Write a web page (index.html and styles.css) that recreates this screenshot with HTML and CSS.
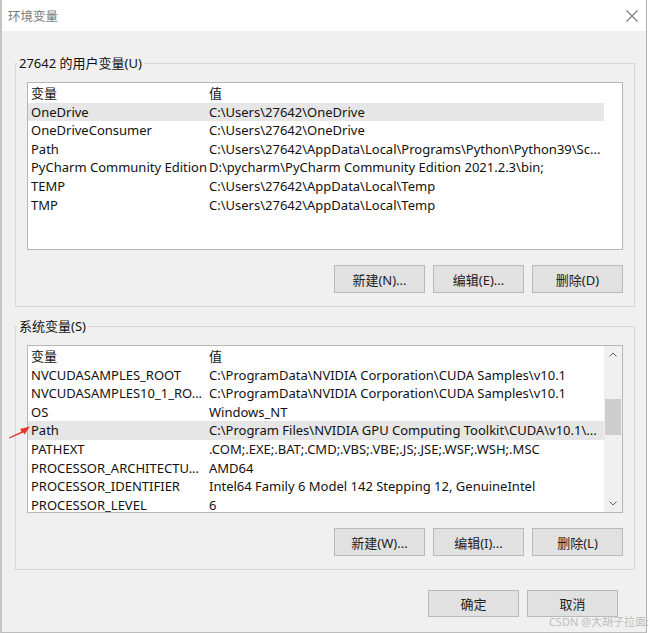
FILE: index.html
```html
<!DOCTYPE html>
<html lang="zh-CN">
<head>
    <meta charset="UTF-8">
    <meta name="viewport" content="width=device-width, initial-scale=1.0">
    <title>环境变量</title>
    <link rel="stylesheet" href="styles.css">
</head>
<body>
    <div class="window">
        <div class="titlebar">
            <span class="title">环境变量</span>
            <svg class="close" width="12" height="12" viewBox="0 0 12 12">
                <path d="M0.5 0.5 L11.5 11.5 M11.5 0.5 L0.5 11.5" stroke="#7a7a7a" stroke-width="1.1" fill="none"/>
            </svg>
        </div>

        <div class="content">
            <!-- Variables utilisateur -->
            <fieldset class="group">
                <legend>27642 的用户变量(U)</legend>
                <div class="group-body">
                    <div class="list">
                        <div class="rows">
                            <div class="row"><span class="name">变量</span><span class="value">值</span></div>
                            <div class="row selected"><span class="name">OneDrive</span><span class="value">C:\Users\27642\OneDrive</span></div>
                            <div class="row"><span class="name">OneDriveConsumer</span><span class="value">C:\Users\27642\OneDrive</span></div>
                            <div class="row"><span class="name">Path</span><span class="value">C:\Users\27642\AppData\Local\Programs\Python\Python39\Sc...</span></div>
                            <div class="row"><span class="name">PyCharm Community Edition</span><span class="value">D:\pycharm\PyCharm Community Edition 2021.2.3\bin;</span></div>
                            <div class="row"><span class="name">TEMP</span><span class="value">C:\Users\27642\AppData\Local\Temp</span></div>
                            <div class="row"><span class="name">TMP</span><span class="value">C:\Users\27642\AppData\Local\Temp</span></div>
                        </div>
                    </div>
                    <div class="buttons">
                        <button>新建(N)...</button>
                        <button>编辑(E)...</button>
                        <button>删除(D)</button>
                    </div>
                </div>
            </fieldset>

            <!-- Variables système -->
            <fieldset class="group system">
                <legend>系统变量(S)</legend>
                <div class="group-body">
                    <div class="list">
                        <div class="rows">
                            <div class="row"><span class="name">变量</span><span class="value">值</span></div>
                            <div class="row"><span class="name">NVCUDASAMPLES_ROOT</span><span class="value">C:\ProgramData\NVIDIA Corporation\CUDA Samples\v10.1</span></div>
                            <div class="row"><span class="name">NVCUDASAMPLES10_1_RO...</span><span class="value">C:\ProgramData\NVIDIA Corporation\CUDA Samples\v10.1</span></div>
                            <div class="row"><span class="name">OS</span><span class="value">Windows_NT</span></div>
                            <div class="row selected"><span class="name">Path</span><span class="value">C:\Program Files\NVIDIA GPU Computing Toolkit\CUDA\v10.1\...</span></div>
                            <div class="row"><span class="name">PATHEXT</span><span class="value">.COM;.EXE;.BAT;.CMD;.VBS;.VBE;.JS;.JSE;.WSF;.WSH;.MSC</span></div>
                            <div class="row"><span class="name">PROCESSOR_ARCHITECTU...</span><span class="value">AMD64</span></div>
                            <div class="row"><span class="name">PROCESSOR_IDENTIFIER</span><span class="value">Intel64 Family 6 Model 142 Stepping 12, GenuineIntel</span></div>
                            <div class="row"><span class="name">PROCESSOR_LEVEL</span><span class="value">6</span></div>
                        </div>
                        <div class="scrollbar">
                            <div class="arrow">
                                <svg width="8" height="5" viewBox="0 0 8 5"><path d="M0.5 4.5 L4 1 L7.5 4.5" stroke="#606060" fill="none"/></svg>
                            </div>
                            <div class="thumb"></div>
                            <div class="arrow down">
                                <svg width="8" height="5" viewBox="0 0 8 5"><path d="M0.5 0.5 L4 4 L7.5 0.5" stroke="#606060" fill="none"/></svg>
                            </div>
                        </div>
                    </div>
                    <div class="buttons">
                        <button>新建(W)...</button>
                        <button>编辑(I)...</button>
                        <button>删除(L)</button>
                    </div>
                </div>
            </fieldset>

            <div class="dialog-buttons">
                <button>确定</button>
                <button>取消</button>
            </div>
        </div>

        <!-- Flèche rouge d'annotation -->
        <svg class="marker" width="32" height="20" viewBox="0 0 32 20">
            <path d="M7 17.5 L19.5 11.6 L18 9 L28 6.5 L22.5 14.5 L21.2 12.6 L7.5 18.5 Z" fill="#e63329"/>
        </svg>

        <div class="watermark">CSDN @大胡子拉面:</div>
    </div>
</body>
</html>
```

FILE: styles.css
```css
* {
    box-sizing: border-box;
}

body {
    margin: 0;
    background-color: #fff;
    font-family: "Noto Sans", "Noto Sans CJK SC", sans-serif;
    font-size: 13px;
    color: #111;
}

.window {
    position: relative;
    width: 647px;
    height: 633px;
    background-color: #f0f0f0;
    border-left: 2px solid #c4c4c4;
    border-right: 1px solid #b0b0b0;
    border-bottom: 1px solid #bcbcbc;
    display: flex;
    flex-direction: column;
}

.titlebar {
    height: 31px;
    background-color: #fff;
    display: flex;
    align-items: center;
    justify-content: space-between;
    padding: 0 8px 0 6px;
}

.title {
    font-size: 12.5px;
    color: #7a7a7a;
}

.content {
    padding: 23px 11px 0 13px;
    display: flex;
    flex-direction: column;
}

.group {
    width: 620px;
    min-width: 0;
    margin: 0;
    padding: 0 0 13px 0;
    border: 1px solid #d6d6d6;
}

.group.system {
    margin-top: 10px;
}

legend {
    margin-left: 1px;
    padding: 0 2px;
    line-height: 18px;
}

.group-body {
    padding: 0 11px;
}

.list {
    margin-top: 10px;
    width: 596px;
    height: 168px;
    background-color: #fff;
    border: 1px solid #b6b6b6;
    display: flex;
    overflow: hidden;
}

.rows {
    width: 576px;
    padding-top: 1px;
}

.row {
    display: flex;
    height: 18.6px;
    line-height: 18.6px;
    padding-left: 3px;
    white-space: nowrap;
}

.row.selected {
    background-color: #e6e6e6;
}

.name {
    width: 178px;
    flex-shrink: 0;
    overflow: hidden;
}

.value {
    flex: 1;
    overflow: hidden;
}

.scrollbar {
    width: 18px;
    margin-left: auto;
    background-color: #f0f0f0;
    display: flex;
    flex-direction: column;
    align-items: center;
}

.arrow {
    height: 17px;
    display: flex;
    align-items: center;
    justify-content: center;
}

.arrow.down {
    margin-top: auto;
}

.thumb {
    width: 16px;
    height: 36px;
    margin-top: 36px;
    background-color: #cdcdcd;
}

.buttons {
    display: flex;
    justify-content: flex-end;
    gap: 8px;
    margin-top: 15px;
}

button {
    width: 91px;
    height: 28px;
    padding: 0;
    font: inherit;
    color: #222;
    background-color: #e1e1e1;
    border: 1px solid #b9b9b9;
}

.dialog-buttons {
    display: flex;
    justify-content: flex-end;
    gap: 8px;
    margin-top: 20px;
    margin-right: 17px;
}

.dialog-buttons button {
    height: 27px;
}

.marker {
    position: absolute;
    left: 0;
    top: 420px;
}

.watermark {
    position: absolute;
    right: -3px;
    bottom: 3px;
    font-size: 11px;
    color: #bdbdbd;
}
```
